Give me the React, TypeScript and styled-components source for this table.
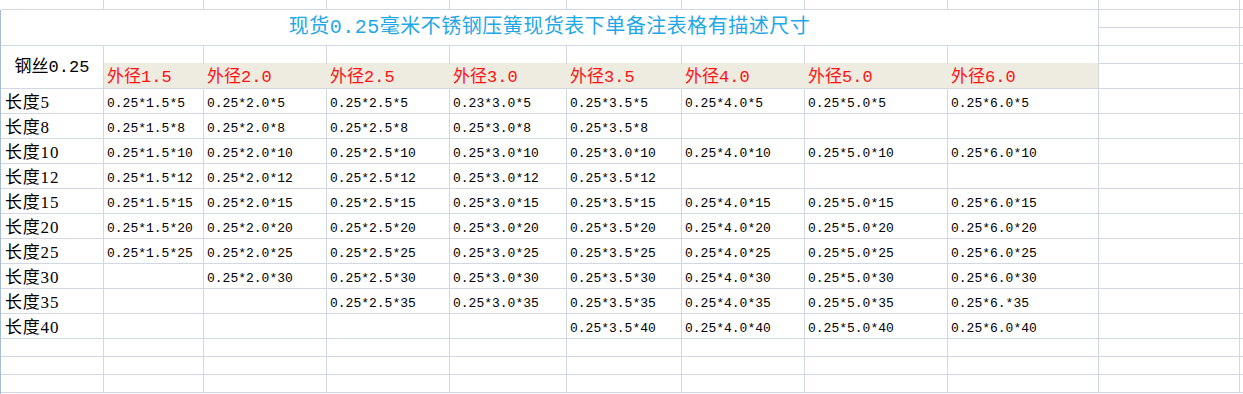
import React from "react";
import styled, { createGlobalStyle } from "styled-components";

const GRID = "#d0d7e5";
const TAN = "#eeece1";

const Global = createGlobalStyle`
  html, body { margin: 0; padding: 0; background: #ffffff; overflow: hidden; }
  #root { width: 1243px; height: 394px; }
`;

const Sheet = styled.div`
  display: grid;
  width: 1243px;
  height: 394px;
  grid-template-columns: 1px 103px 100px 123px 123px 117px 115px 123px 143px 151px 141px 1fr;
  grid-template-rows: 10px 18px 18px 18px 25px repeat(10, 25px) 18px 18px 18px 1fr;
  background: #ffffff;
  overflow: hidden;
`;

const Edge = styled.div`
  grid-column: 1;
  grid-row: 2 / -1;
  background: #a9bcd6;
`;

const Blank = styled.div``;

const Cell = styled.div<{ $bg?: string; $right?: string; $bottom?: string; $noRight?: boolean }>`
  box-sizing: border-box;
  min-width: 0;
  background: ${(p) => p.$bg ?? "transparent"};
  border-right: ${(p) => (p.$noRight ? "none" : `1px solid ${p.$right ?? GRID}`)};
  border-bottom: 1px solid ${(p) => p.$bottom ?? GRID};
  white-space: nowrap;
  overflow: visible;
`;

const TitleCell = styled(Cell)`
  grid-column: span 9;
  grid-row: span 2;
  display: flex;
  align-items: center;
  justify-content: center;
  padding-top: 1px;
  font-family: "Liberation Mono", "Noto Sans CJK SC", sans-serif;
  font-size: 20px;
  line-height: 20px;
  color: #1fa8e6;
  letter-spacing: 0.5px;
`;

const CornerCell = styled(Cell)`
  grid-row: span 2;
  display: flex;
  align-items: center;
  justify-content: center;
  padding-top: 1px;
  font-family: "Liberation Mono", "Noto Sans CJK SC", monospace;
  font-size: 17px;
  line-height: 17px;
  color: #000000;
`;

const HeadCell = styled(Cell)`
  display: flex;
  align-items: flex-end;
  padding: 0 0 2px 3px;
  font-family: "Liberation Mono", "Noto Sans CJK SC", monospace;
  font-size: 17px;
  line-height: 17px;
  color: #ff1111;
`;

const LabelCell = styled(Cell)`
  display: flex;
  align-items: flex-end;
  padding: 0 0 2px 4px;
  font-family: "Liberation Serif", "Noto Sans CJK SC", serif;
  font-size: 17px;
  line-height: 17px;
  letter-spacing: 0.8px;
  color: #000000;
`;

const DataCell = styled(Cell)`
  display: flex;
  align-items: flex-end;
  padding: 0 0 3px 3px;
  font-family: "Liberation Mono", monospace;
  font-size: 13px;
  line-height: 13px;
  color: #000000;
`;

const heads = ["1.5", "2.0", "2.5", "3.0", "3.5", "4.0", "5.0", "6.0"];

const rows: { len: string; cells: string[] }[] = [
  { len: "5", cells: ["0.25*1.5*5", "0.25*2.0*5", "0.25*2.5*5", "0.23*3.0*5", "0.25*3.5*5", "0.25*4.0*5", "0.25*5.0*5", "0.25*6.0*5"] },
  { len: "8", cells: ["0.25*1.5*8", "0.25*2.0*8", "0.25*2.5*8", "0.25*3.0*8", "0.25*3.5*8", "", "", ""] },
  { len: "10", cells: ["0.25*1.5*10", "0.25*2.0*10", "0.25*2.5*10", "0.25*3.0*10", "0.25*3.0*10", "0.25*4.0*10", "0.25*5.0*10", "0.25*6.0*10"] },
  { len: "12", cells: ["0.25*1.5*12", "0.25*2.0*12", "0.25*2.5*12", "0.25*3.0*12", "0.25*3.5*12", "", "", ""] },
  { len: "15", cells: ["0.25*1.5*15", "0.25*2.0*15", "0.25*2.5*15", "0.25*3.0*15", "0.25*3.5*15", "0.25*4.0*15", "0.25*5.0*15", "0.25*6.0*15"] },
  { len: "20", cells: ["0.25*1.5*20", "0.25*2.0*20", "0.25*2.5*20", "0.25*3.0*20", "0.25*3.5*20", "0.25*4.0*20", "0.25*5.0*20", "0.25*6.0*20"] },
  { len: "25", cells: ["0.25*1.5*25", "0.25*2.0*25", "0.25*2.5*25", "0.25*3.0*25", "0.25*3.5*25", "0.25*4.0*25", "0.25*5.0*25", "0.25*6.0*25"] },
  { len: "30", cells: ["", "0.25*2.0*30", "0.25*2.5*30", "0.25*3.0*30", "0.25*3.5*30", "0.25*4.0*30", "0.25*5.0*30", "0.25*6.0*30"] },
  { len: "35", cells: ["", "", "0.25*2.5*35", "0.25*3.0*35", "0.25*3.5*35", "0.25*4.0*35", "0.25*5.0*35", "0.25*6.*35"] },
  { len: "40", cells: ["", "", "", "", "0.25*3.5*40", "0.25*4.0*40", "0.25*5.0*40", "0.25*6.0*40"] },
];

const range = (n: number) => Array.from({ length: n }, (_, i) => i);

function EmptyRow() {
  return (
    <>
      {range(10).map((i) => (
        <Cell key={i} />
      ))}
      <Cell $noRight />
    </>
  );
}

export default function App() {
  return (
    <>
      <Global />
      <Sheet>
        <Edge />
        {/* row 0 */}
        <Blank />
        <EmptyRow />

        {/* title rows */}
        <TitleCell>现货0.25毫米不锈钢压簧现货表下单备注表格有描述尺寸</TitleCell>
        <Cell />
        <Cell $noRight />
        <Cell />
        <Cell $noRight />

        {/* header rows */}
        <CornerCell>钢丝0.25</CornerCell>
        {range(8).map((i) => (
          <Cell key={`sp${i}`} $bottom={TAN} />
        ))}
        <Cell />
        <Cell $noRight />
        {heads.map((h, i) => (
          <HeadCell key={h} $bg={TAN} $right={i === heads.length - 1 ? GRID : TAN}>
            外径{h}
          </HeadCell>
        ))}
        <Cell />
        <Cell $noRight />

        {/* data rows */}
        {rows.map((r) => (
          <React.Fragment key={r.len}>
            <LabelCell>长度{r.len}</LabelCell>
            {r.cells.map((c, i) => (
              <DataCell key={i}>{c}</DataCell>
            ))}
            <Cell />
            <Cell $noRight />
          </React.Fragment>
        ))}

        {/* trailing empty rows */}
        <EmptyRow />
        <EmptyRow />
        <EmptyRow />
      </Sheet>
    </>
  );
}
